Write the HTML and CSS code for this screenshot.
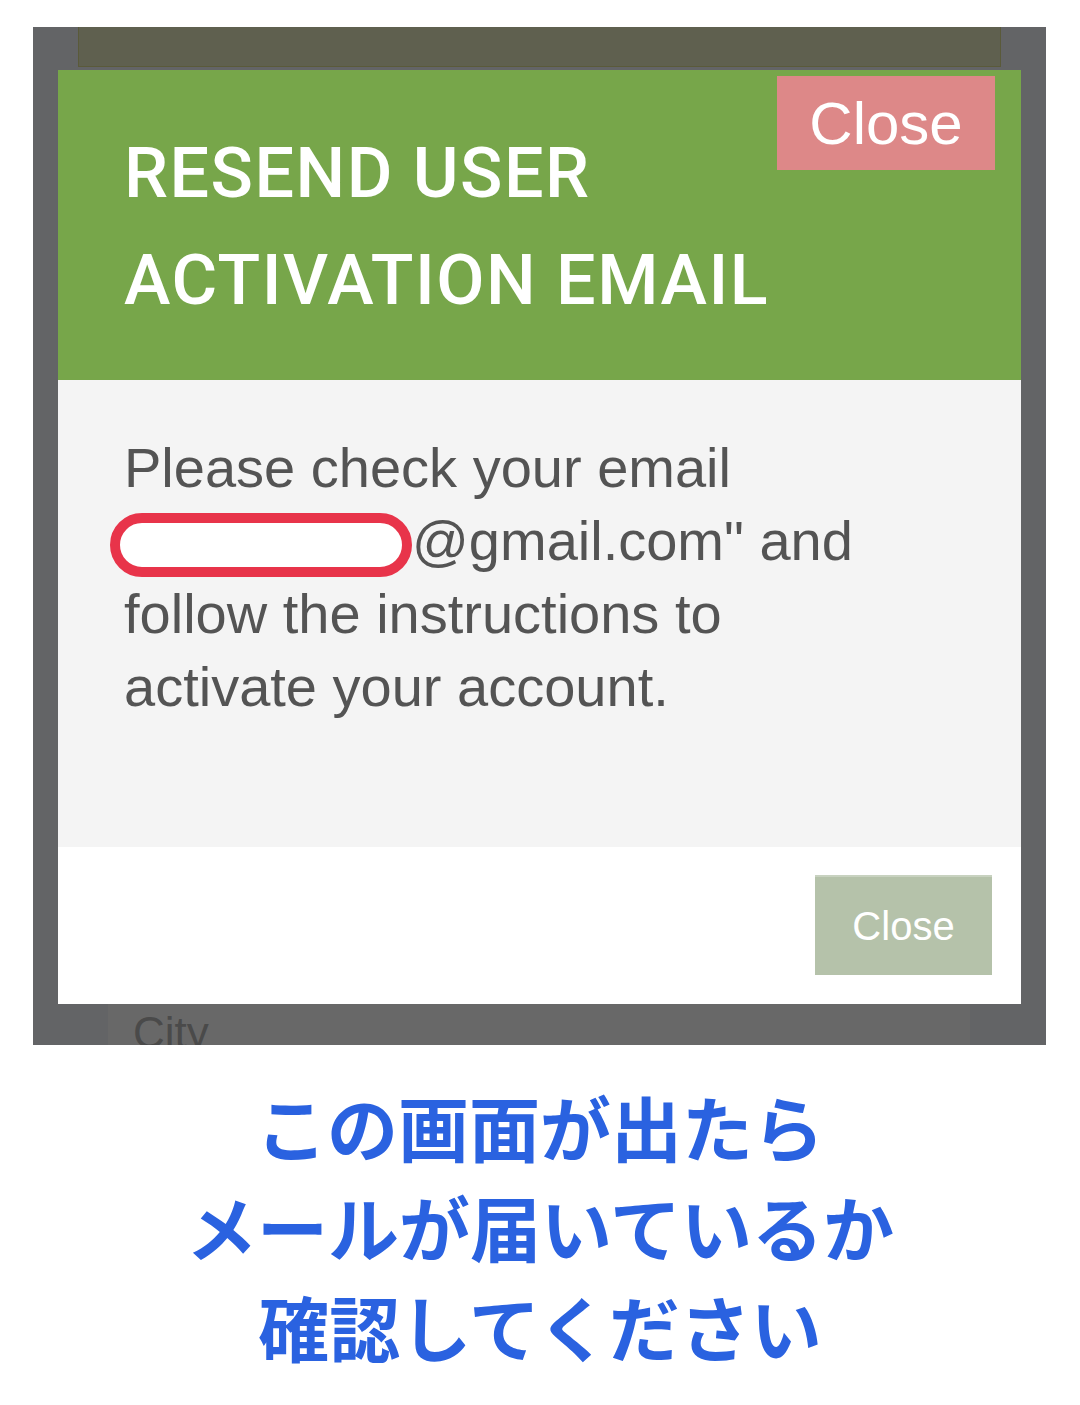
FILE: index.html
```html
<!DOCTYPE html>
<html lang="ja">
<head>
  <meta charset="UTF-8" />
  <title>Resend activation email</title>
  <link rel="stylesheet" href="styles.css">
</head>
<body>
  <div class="shot">
    <div class="topbar"></div>

    <div class="modal">
      <div class="modal-header">
        <h2>RESEND USER<br>ACTIVATION EMAIL</h2>
        <button class="close-top">Close</button>
      </div>
      <div class="modal-body">
        <p>Please check your email <span class="mask"></span>@gmail.com" and follow the instructions to activate your account.</p>
      </div>
      <div class="modal-footer">
        <button class="close-bottom">Close</button>
      </div>
    </div>

    <div class="field">City</div>
  </div>

  <p class="caption">この画面が出たら<br>メールが届いているか<br>確認してください</p>
</body>
</html>
```

FILE: styles.css
```css
* {
  margin: 0;
  padding: 0;
  box-sizing: border-box;
}

body {
  background: #fff;
  font-family: 'Liberation Sans', Arial, sans-serif;
}

.shot {
  width: 1013px;
  height: 1018px;
  margin: 27px 0 0 33px;
  background: #636466;
  overflow: hidden;
}

.topbar {
  width: 923px;
  height: 40px;
  margin-left: 45px;
  background: #5f604f;
  border: 1px solid #5a5a3a;
  border-top: none;
}

.modal {
  width: 963px;
  margin: 3px 0 0 25px;
}

.modal-header {
  position: relative;
  height: 310px;
  background: #77a64a;
  padding: 50px 0 0 66px;
}

.modal-header h2 {
  color: #fff;
  font-family: Roboto, 'Liberation Sans', sans-serif;
  font-size: 70px;
  font-weight: 500;
  line-height: 107px;
  letter-spacing: 1.5px;
}

.close-top {
  position: absolute;
  top: 6px;
  right: 26px;
  width: 218px;
  height: 94px;
  border: none;
  background: #dd8888;
  color: #fff;
  font-family: 'Liberation Sans', Arial, sans-serif;
  font-size: 60px;
}

.modal-body {
  height: 467px;
  background: #f4f4f4;
  padding: 51px 130px 0 66px;
}

.modal-body p {
  color: #545454;
  font-size: 56px;
  line-height: 73px;
}

.mask {
  display: inline-block;
  width: 302px;
  height: 64px;
  margin: -10px 0 -10px -14px;
  vertical-align: middle;
  background: #fff;
  border: 10px solid #e8344a;
  border-radius: 32px;
}

.modal-footer {
  display: flex;
  justify-content: flex-end;
  height: 157px;
  background: #fff;
  padding: 28px 29px 0 0;
}

.close-bottom {
  width: 177px;
  height: 100px;
  border: none;
  border-top: 2px solid #c8d2c0;
  background: #b5c2aa;
  color: #fff;
  font-family: 'Liberation Sans', Arial, sans-serif;
  font-size: 40px;
}

.field {
  width: 862px;
  height: 41px;
  margin-left: 75px;
  background: #686868;
  color: #4a4a4a;
  font-size: 44px;
  line-height: 58px;
  padding-left: 25px;
}

.caption {
  margin-top: 30px;
  text-align: center;
  color: #2a62e0;
  font-family: 'Noto Sans CJK JP', sans-serif;
  font-weight: bold;
  font-size: 71px;
  line-height: 100px;
}
```
